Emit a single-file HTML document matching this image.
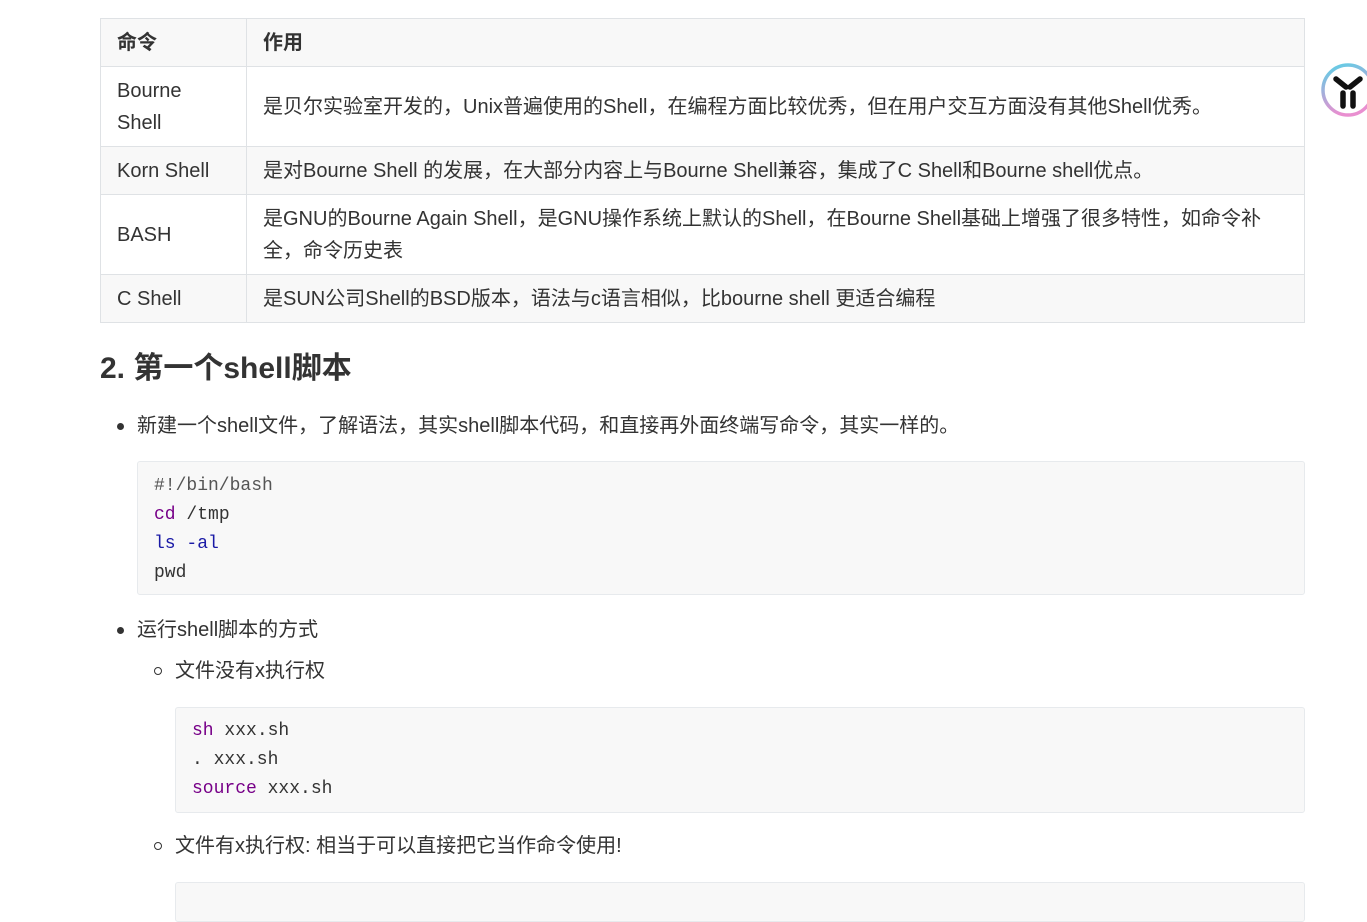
<!DOCTYPE html>
<html><head><meta charset="utf-8"><style>
*{box-sizing:border-box}
body{margin:0;width:1367px;height:885px;overflow:hidden;background:#fff;color:#333;font-family:"Liberation Sans","Noto Sans CJK SC",sans-serif;font-size:20px;position:relative}
table{position:absolute;left:100px;top:18px;width:1205px;border-collapse:collapse}
td,th{border:1px solid #dfe2e5;padding:0 16px;text-align:left;line-height:32px;vertical-align:middle}
th{font-weight:bold;height:48px}
tr.g{background:#f8f8f8}
td.c1{width:146px}
h2{position:absolute;left:100px;top:347px;margin:0;font-size:30px;font-weight:bold;line-height:44px}
.li{position:absolute;line-height:30px}
.dot{position:absolute;width:7px;height:7px;border-radius:50%;background:#333}
.circ{position:absolute;width:8px;height:8px;border-radius:50%;border:1.3px solid #333}
pre{position:absolute;margin:0;background:#f8f8f8;border:1px solid #e7eaed;border-radius:3px;font-family:"Liberation Mono","DejaVu Sans Mono",monospace;font-size:18px;line-height:29px;padding:10px 16px 9px;color:#333}
.k{color:#1a1aa6}.p{color:#708}
</style></head><body>
<table>
<tr class="g"><th class="c1">命令</th><th>作用</th></tr>
<tr style="height:80px"><td class="c1">Bourne<br>Shell</td><td>是贝尔实验室开发的，Unix普遍使用的Shell，在编程方面比较优秀，但在用户交互方面没有其他Shell优秀。</td></tr>
<tr class="g" style="height:48px"><td class="c1">Korn Shell</td><td>是对Bourne Shell 的发展，在大部分内容上与Bourne Shell兼容，集成了C Shell和Bourne shell优点。</td></tr>
<tr style="height:80px"><td class="c1">BASH</td><td>是GNU的Bourne Again Shell，是GNU操作系统上默认的Shell，在Bourne Shell基础上增强了很多特性，如命令补<br>全，命令历史表</td></tr>
<tr class="g" style="height:48px"><td class="c1">C Shell</td><td>是SUN公司Shell的BSD版本，语法与c语言相似，比bourne shell 更适合编程</td></tr>
</table>
<svg style="position:absolute;left:1318px;top:62px" width="60" height="60" viewBox="0 0 60 60">
<defs><linearGradient id="g" x1="0" y1="0" x2="0.3" y2="1"><stop offset="0" stop-color="#5cd0e6"/><stop offset="1" stop-color="#e98fd0"/></linearGradient></defs>
<circle cx="30" cy="28" r="25" fill="#fff" stroke="url(#g)" stroke-width="3.5"/>
<path d="M18 17 L28 25 M42 17 L32 25 M25 31 L25 44 M35 31 L35 44" stroke="#111" stroke-width="5.5" stroke-linecap="round"/>
</svg>
<h2>2. 第一个shell脚本</h2>
<div class="dot" style="left:117px;top:423px"></div>
<div class="li" style="left:137px;top:411px">新建一个shell文件，了解语法，其实shell脚本代码，和直接再外面终端写命令，其实一样的。</div>
<pre style="left:137px;top:461px;width:1168px;height:134px"><span style="color:#555">#!/bin/bash</span>
<span class="p">cd</span> /tmp
<span class="k">ls</span> <span class="k">-al</span>
pwd</pre>
<div class="dot" style="left:117px;top:627px"></div>
<div class="li" style="left:137px;top:615px">运行shell脚本的方式</div>
<div class="circ" style="left:154px;top:667px"></div>
<div class="li" style="left:175px;top:656px">文件没有x执行权</div>
<pre style="left:175px;top:707px;width:1130px;height:106px;padding-top:9px"><span class="p">sh</span> xxx.sh
. xxx.sh
<span class="p">source</span> xxx.sh</pre>
<div class="circ" style="left:154px;top:842px"></div>
<div class="li" style="left:175px;top:831px">文件有x执行权: 相当于可以直接把它当作命令使用!</div>
<pre style="left:175px;top:882px;width:1130px;height:40px"></pre>
</body></html>
